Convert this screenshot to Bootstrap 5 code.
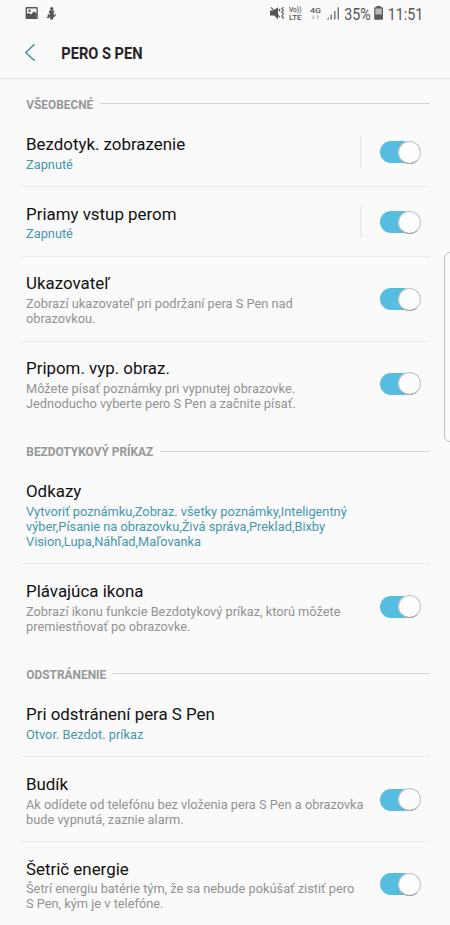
<!DOCTYPE html>
<html lang="sk">
<head>
<meta charset="utf-8">
<meta name="viewport" content="width=device-width, initial-scale=1">
<title>Pero S Pen</title>
<link rel="stylesheet" href="https://cdn.jsdelivr.net/npm/bootstrap@5.3.0/dist/css/bootstrap.min.css">
<style>
html, body { height: 925px; }
body { background: #fafafa; font-family: Roboto, "Liberation Sans", sans-serif; color: #111; }
svg { display: block; flex: none; overflow: visible; }
svg text { font-family: Roboto, "Liberation Sans", sans-serif; }
.screen { width: 450px; height: 925px; }
.status-bar { height: 27px; padding: 0 26px 0 25px; }
.title-bar { height: 52px; border-bottom: 1px solid #e2e2e2; }
.section-head { height: 38.500px; padding: 11px 20px 0 26px; }
.section-rule { height: 1px; background: #d4d4d4; }
.setting { margin: 0 20px; padding: 15.600px 9px 14.500px 6px; border-bottom: 1px solid #ebebeb; }
.setting.last-one { border-bottom-color: transparent; }
.setting-title { font-size: 16.900px; line-height: 22px; }
.setting-note { font-size: 12.800px; line-height: 15px; padding-top: 1.600px; color: #929292; white-space: nowrap; }
.setting-note.on { color: #4497ae; }
.toggle-sep { width: 2px; height: 32px; background: #ececec; margin-right: 18px; }
.toggle { width: 41px; height: 24px; }
.toggle-track { width: 34px; height: 22px; border-radius: 11px; background: #55bde0; }
.toggle-knob { width: 23px; height: 23px; margin-left: -16px; border-radius: 50%; background: #fdfdfd; border: 1px solid #c4c4c4; border-bottom-color: #a5a5a5; }
.edge-handle { left: 444px; top: 252px; width: 14px; height: 190px; border: 1px solid #bdbdbd; border-radius: 6px; background: #fcfcfc; }
</style>
</head>
<body>
<div class="screen position-relative overflow-hidden">
  <header>
    <div class="status-bar d-flex justify-content-between align-items-center">
      <svg width="34" height="27" viewBox="0 0 34 27">
        <path fill="#555" fill-rule="evenodd" d="M1.6 7h10.2q1 0 1 1v10q0 1-1 1H1.6q-1 0-1-1V8q0-1 1-1zM2 8.400v9.200h9.500V8.400z"/>
        <path fill="#555" d="M1.500 18v-3.500l2.300-1.700 2.200 1.600 3-3.200 2.700 2.300V18z"/><circle cx="4.500" cy="10.800" r="1.200" fill="#555"/>
        <circle cx="26.700" cy="8.600" r="1.700" fill="#555"/>
        <path fill="#555" d="M24.800 10.200h3.500l.5 4 1 1.500-1.400 1.500-.4 2.300h-2.800v-2.800l-1.700 1.500-1.700-.5-.2-1 1.700-.2-1-1.600 1.600-.8 1 .8.300-1.500-1.600-.7z"/>
        <path fill="none" stroke="#555" stroke-width=".9" d="M28.500 16.800q2.500-.4 1.800-3M28 10.500l1.600 1.500"/>
      </svg>
      <svg width="154" height="27" viewBox="270 0 154 27" fill="#555">
        <path d="M270 10.500h3.200l4.800-3.300v12.400l-3.800-4H270z"/>
        <path fill="none" stroke="#555" stroke-width="1.100" d="M271 7.400l9 10M283.500 7.200l-1.800 1.500 1.800 1.800-1.800 1.800 1.800 1.800-1.800 1.800 1.800 1.800-1 1M280 9l-1 1 1.200 1.500"/>
        <text x="289" y="12.300" font-size="7" font-weight="500" textLength="12.500" lengthAdjust="spacingAndGlyphs">Vo))</text>
        <text x="289" y="19.700" font-size="8" font-weight="500" textLength="12.500" lengthAdjust="spacingAndGlyphs">LTE</text>
        <text x="310" y="12.900" font-size="8" font-weight="500" textLength="11" lengthAdjust="spacingAndGlyphs">4G</text>
        <path fill="#b5b5b5" d="M312.700 15.200h1v2.500h1l-1.500 1.800-1.500-1.800h1zM317.200 19.200h1v-2.500h1l-1.500-1.700-1.500 1.700h1z"/>
        <path fill="#777" d="M326.500 19.500l2.500-2.600v2.600zM330.500 14.400h1.500v5.100h-1.500zM334 11h1.500v8.500H334zM337.500 7.300h1.500v12.200h-1.500z"/>
        <text x="344.300" y="19.500" font-size="16.800" textLength="26.500" lengthAdjust="spacingAndGlyphs">35%</text>
        <path fill="#5a5a5a" d="M376.400 6h4.400v1.200h1.200q1 0 1 1v10.600q0 1-1 1h-6.800q-1 0-1-1V8.200q0-1 1-1h1.200z"/><path fill="#b9b9b9" d="M375.400 8.500h6.400v6h-6.400z"/>
        <text x="387.800" y="19.500" font-size="16.800" textLength="35.500" lengthAdjust="spacingAndGlyphs">11:51</text>
      </svg>
    </div>
    <div class="title-bar">
      <svg width="450" height="50" viewBox="0 27 450 50">
        <path d="M34.500 44.300L25.800 52.500l8.700 8.300" fill="none" stroke="#428fa8" stroke-width="1.500"/>
        <text x="61.300" y="59.200" font-size="16.800" font-weight="700" fill="#252525" textLength="81.200" lengthAdjust="spacingAndGlyphs">PERO S PEN</text>
      </svg>
    </div>
  </header>
  <main>
    <div class="section-head d-flex align-items-center">
      <svg width="74" height="20"><text x="0.300" y="14.700" font-size="13.300" font-weight="700" fill="#979797" textLength="67" lengthAdjust="spacingAndGlyphs">VŠEOBECNÉ</text></svg>
      <div class="section-rule flex-grow-1"></div>
    </div>
    <section class="setting d-flex align-items-center">
      <div class="flex-grow-1"><div class="setting-title">Bezdotyk. zobrazenie</div><div class="setting-note on">Zapnuté</div></div>
      <div class="toggle-sep"></div>
      <div class="toggle d-flex align-items-center"><span class="toggle-track flex-shrink-0"></span><span class="toggle-knob flex-shrink-0"></span></div>
    </section>
    <section class="setting d-flex align-items-center">
      <div class="flex-grow-1"><div class="setting-title">Priamy vstup perom</div><div class="setting-note on">Zapnuté</div></div>
      <div class="toggle-sep"></div>
      <div class="toggle d-flex align-items-center"><span class="toggle-track flex-shrink-0"></span><span class="toggle-knob flex-shrink-0"></span></div>
    </section>
    <section class="setting d-flex align-items-center">
      <div class="flex-grow-1"><div class="setting-title">Ukazovateľ</div><div class="setting-note">Zobrazí ukazovateľ pri podržaní pera S Pen nad<br>obrazovkou.</div></div>
      <div class="toggle d-flex align-items-center"><span class="toggle-track flex-shrink-0"></span><span class="toggle-knob flex-shrink-0"></span></div>
    </section>
    <section class="setting last-one d-flex align-items-center">
      <div class="flex-grow-1"><div class="setting-title">Pripom. vyp. obraz.</div><div class="setting-note">Môžete písať poznámky pri vypnutej obrazovke.<br>Jednoducho vyberte pero S Pen a začnite písať.</div></div>
      <div class="toggle d-flex align-items-center"><span class="toggle-track flex-shrink-0"></span><span class="toggle-knob flex-shrink-0"></span></div>
    </section>
    <div class="section-head d-flex align-items-center">
      <svg width="134" height="20"><text x="0.300" y="14.700" font-size="13.300" font-weight="700" fill="#979797" textLength="127" lengthAdjust="spacingAndGlyphs">BEZDOTYKOVÝ PRÍKAZ</text></svg>
      <div class="section-rule flex-grow-1"></div>
    </div>
    <section class="setting">
      <div class="setting-title">Odkazy</div><div class="setting-note on">Vytvoriť poznámku,Zobraz. všetky poznámky,Inteligentný<br>výber,Písanie na obrazovku,Živá správa,Preklad,Bixby<br>Vision,Lupa,Náhľad,Maľovanka</div>
    </section>
    <section class="setting last-one d-flex align-items-center">
      <div class="flex-grow-1"><div class="setting-title">Plávajúca ikona</div><div class="setting-note">Zobrazí ikonu funkcie Bezdotykový príkaz, ktorú môžete<br>premiestňovať po obrazovke.</div></div>
      <div class="toggle d-flex align-items-center"><span class="toggle-track flex-shrink-0"></span><span class="toggle-knob flex-shrink-0"></span></div>
    </section>
    <div class="section-head d-flex align-items-center">
      <svg width="87" height="20"><text x="0.300" y="14.700" font-size="13.300" font-weight="700" fill="#979797" textLength="80" lengthAdjust="spacingAndGlyphs">ODSTRÁNENIE</text></svg>
      <div class="section-rule flex-grow-1"></div>
    </div>
    <section class="setting">
      <div class="setting-title">Pri odstránení pera S Pen</div><div class="setting-note on">Otvor. Bezdot. príkaz</div>
    </section>
    <section class="setting d-flex align-items-center">
      <div class="flex-grow-1"><div class="setting-title">Budík</div><div class="setting-note">Ak odídete od telefónu bez vloženia pera S Pen a obrazovka<br>bude vypnutá, zaznie alarm.</div></div>
      <div class="toggle d-flex align-items-center"><span class="toggle-track flex-shrink-0"></span><span class="toggle-knob flex-shrink-0"></span></div>
    </section>
    <section class="setting last-one d-flex align-items-center">
      <div class="flex-grow-1"><div class="setting-title">Šetrič energie</div><div class="setting-note">Šetrí energiu batérie tým, že sa nebude pokúšať zistiť pero<br>S Pen, kým je v telefóne.</div></div>
      <div class="toggle d-flex align-items-center"><span class="toggle-track flex-shrink-0"></span><span class="toggle-knob flex-shrink-0"></span></div>
    </section>
  </main>
  <div class="edge-handle position-absolute"></div>
</div>
<script src="https://cdn.jsdelivr.net/npm/bootstrap@5.3.0/dist/js/bootstrap.bundle.min.js"></script>
</body>
</html>
